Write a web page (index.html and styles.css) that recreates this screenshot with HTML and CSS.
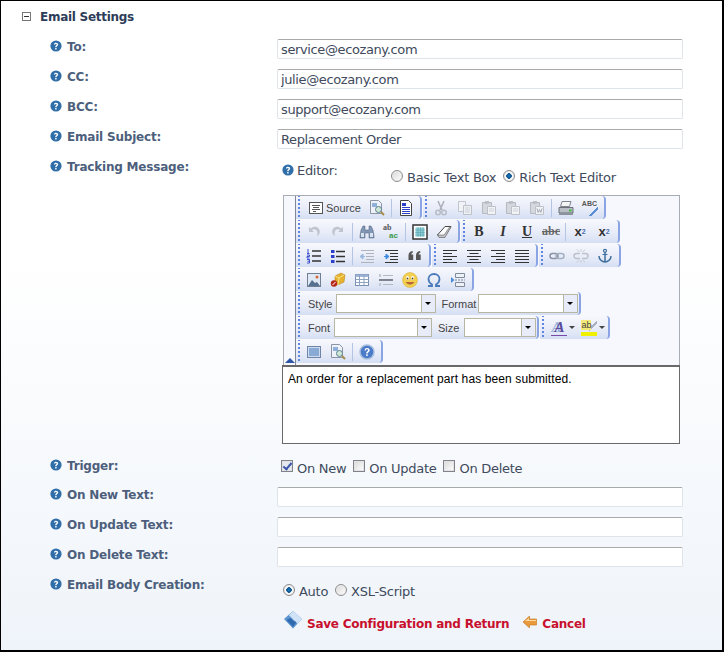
FILE: index.html
```html
<!DOCTYPE html>
<html>
<head>
  <title>Email Settings</title>
  <link rel="stylesheet" href="styles.css">
</head>
<body>
  <svg class="defs" width="0" height="0">
    <symbol id="help" viewBox="0 0 12 12"><circle cx="6" cy="6" r="5.6" fill="#2f6ea8"/><path d="M3.9 4.6C4 3.4 4.9 2.8 6 2.8c1.300 0 2.200.7 2.200 1.800 0 1.500-1.700 1.400-1.700 2.700H5.200c0-1.900 1.500-1.800 1.500-2.700 0-.4-.3-.7-.8-.7-.5 0-.8.300-.9.700zM5.200 8.100h1.400v1.300H5.200z" fill="#fff"/></symbol>
    <symbol id="source" viewBox="0 0 16 16"><rect x="1.500" y="2.500" width="13" height="11" fill="#fff" stroke="#555"/><path d="M4 5.500h8M5 7.500h6M4 9.500h8M5 11.500h3" stroke="#555"/></symbol>
    <symbol id="preview" viewBox="0 0 16 16"><path d="M1.500.5h8l3 3v10h-11z" fill="#eef2f8" stroke="#8a94a4"/><rect x="3" y="3" width="5" height="4" fill="#8fb0d8"/><circle cx="9.500" cy="9.500" r="3" fill="#cfe8d8" stroke="#5e7f92"/><path d="M12 12l3 3" stroke="#a68b4a" stroke-width="2"/></symbol>
    <symbol id="templates" viewBox="0 0 16 16"><path d="M2.500.5h8l3 3v12h-11z" fill="#fff" stroke="#444"/><path d="M4 3h4v3H4z" fill="#2b3fc8"/><path d="M4 7.500h8M4 9.500h8M4 11.500h8M4 13.500h8" stroke="#2b3fc8"/></symbol>
    <symbol id="cut" viewBox="0 0 16 16"><path d="M5 1l4 9M11 1L7 10" stroke="#aab0ba" stroke-width="1.500" fill="none"/><circle cx="5" cy="12.500" r="2.300" fill="none" stroke="#b7bcc6" stroke-width="1.500"/><circle cx="11" cy="12.500" r="2.300" fill="none" stroke="#b7bcc6" stroke-width="1.500"/></symbol>
    <symbol id="copy" viewBox="0 0 16 16"><path d="M1.500 1.500h7v10h-7z" fill="#f2f3f6" stroke="#c2c6ce"/><path d="M6.500 5.500h8v9h-8z" fill="#eef0f4" stroke="#bcc1ca"/><path d="M8 8h5M8 10h5M8 12h5" stroke="#cdd1d8"/></symbol>
    <symbol id="paste" viewBox="0 0 16 16"><path d="M1.500 2.500h9v11h-9z" fill="#d5d8de" stroke="#b4b8c0"/><path d="M4 1h4v3H4z" fill="#bcc0c8"/><path d="M6.500 6.500h8v8h-8z" fill="#f2f3f6" stroke="#bcc1ca"/><path d="M8 9h5M8 11h5" stroke="#cdd1d8"/></symbol>
    <symbol id="paste-word" viewBox="0 0 16 16"><path d="M1.500 2.500h9v11h-9z" fill="#d5d8de" stroke="#b4b8c0"/><path d="M4 1h4v3H4z" fill="#bcc0c8"/><path d="M6.500 6.500h8v8h-8z" fill="#f2f3f6" stroke="#bcc1ca"/><path d="M8 8.500l1.200 4 1.300-3 1.300 3 1.200-4" stroke="#a4a9b2" fill="none"/></symbol>
    <symbol id="print" viewBox="0 0 16 16"><path d="M4 1.500h9l-1.500 5h-9z" fill="#f4f4f4" stroke="#7f858e"/><path d="M1 7.500h14v5.500H1z" fill="#b9bec6" stroke="#6b7079"/><path d="M1 13h14v2H1z" fill="#8d939c"/><rect x="11" y="9.500" width="2.500" height="2" fill="#3fc03f"/></symbol>
    <symbol id="undo" viewBox="0 0 16 16"><path d="M3 3v5h5L6 6c2.500-1.500 5-.5 5.500 3 .1 1-.2 2-1 3 3-1 4-3.500 3-6-1.200-3-5.500-4.500-8.500-1.500z" fill="#c0c5cd"/></symbol>
    <symbol id="redo" viewBox="0 0 16 16"><path d="M13 3v5H8l2-2C7.500 4.500 5 5.500 4.500 9c-.1 1 .2 2 1 3-3-1-4-3.500-3-6C3.700 3 8 1.500 11 4.500z" fill="#c0c5cd"/></symbol>
    <symbol id="find" viewBox="0 0 16 16"><path d="M2 6l2-4h2v4h4V2h2l2 4 1 6v2h-5V9H6v5H1v-2z" fill="#8096b4" stroke="#4d5f78" stroke-width=".5"/><rect x="2" y="9" width="3" height="4" fill="#d9e3f0"/><rect x="11" y="9" width="3" height="4" fill="#d9e3f0"/></symbol>
    <symbol id="select-all" viewBox="0 0 16 16"><rect x="1" y="1" width="14" height="14" fill="#fff" stroke="#333" stroke-width="1.500"/><rect x="3.500" y="3.500" width="9" height="9" fill="#8fd0d8"/><path d="M3 6h10M3 8.500h10M3 11h10M6 3v10M8.500 3v10M11 3v10" stroke="#4f9aa8" stroke-width=".5"/></symbol>
    <symbol id="eraser" viewBox="0 0 16 16"><path d="M1.500 11L9 2.500h6l-6 9.500H3z" fill="#fff" stroke="#444"/><path d="M1.500 11l1.500 2.500h6l6-10.500-1-.5-6 8.500z" fill="#c0c2c8" stroke="#444" stroke-width=".5"/></symbol>
    <symbol id="ol" viewBox="0 0 16 16"><path d="M6 3h9M6 8h9M6 13h9" stroke="#333" stroke-width="1.300"/><path d="M2 1v4M1 5.500h2.500M1 7h2.500v1.500H1V10h2.500M1 11.500h2.500V15H1M1.500 13.200h2" stroke="#2b3fc8" stroke-width=".9" fill="none"/></symbol>
    <symbol id="ul" viewBox="0 0 16 16"><path d="M6 3.500h9M6 8.500h9M6 13.500h9" stroke="#333" stroke-width="1.300"/><path d="M1 2h3.500v3H1zM1 7h3.500v3H1zM1 12h3.500v3H1z" fill="#2b3fc8"/></symbol>
    <symbol id="outdent" viewBox="0 0 16 16"><path d="M2 2.500h13M7 5.500h8M7 8.500h8M7 11.500h8M2 14.500h13" stroke="#aeb3bc"/><path d="M1 8.500l3-2.500v5zM3 8.500h3" stroke="#9ab8de" fill="#9ab8de"/></symbol>
    <symbol id="indent" viewBox="0 0 16 16"><path d="M2 2.500h13M7 5.500h8M7 8.500h8M7 11.500h8M2 14.500h13" stroke="#333"/><path d="M6 8.500L3 6v5zM1 8.500h3" stroke="#3d8be0" fill="#3d8be0"/></symbol>
    <symbol id="quote" viewBox="0 0 16 16"><path d="M1.500 7.500c0-2.500 1.500-4 4-4.500l.5 1.500c-1 .4-1.700 1-1.800 2h2v5.500h-4.700zM9 7.500C9 5 10.500 3.500 13 3l.5 1.500c-1 .4-1.700 1-1.800 2h2v5.500H9z" fill="#555"/></symbol>
    <symbol id="left" viewBox="0 0 16 16"><path d="M1 2.500h14M1 5.500h9M1 8.500h14M1 11.500h9M1 14.500h14" stroke="#333"/></symbol>
    <symbol id="center" viewBox="0 0 16 16"><path d="M1 2.500h14M3.500 5.500h9M1 8.500h14M3.500 11.500h9M1 14.500h14" stroke="#333"/></symbol>
    <symbol id="right" viewBox="0 0 16 16"><path d="M1 2.500h14M6 5.500h9M1 8.500h14M6 11.500h9M1 14.500h14" stroke="#333"/></symbol>
    <symbol id="justify" viewBox="0 0 16 16"><path d="M1 2.500h14M1 5.500h14M1 8.500h14M1 11.500h14M1 14.500h14" stroke="#333"/></symbol>
    <symbol id="link" viewBox="0 0 16 16"><rect x="1" y="5.500" width="8" height="5" rx="2.500" fill="none" stroke="#8a94a6" stroke-width="1.500"/><rect x="7" y="5.500" width="8" height="5" rx="2.500" fill="none" stroke="#a3b0c4" stroke-width="1.500"/></symbol>
    <symbol id="unlink" viewBox="0 0 16 16"><path d="M7 5.500H3.500a2.500 2.500 0 0 0 0 5H7M9 5.500h3.500a2.500 2.500 0 0 1 0 5H9" fill="none" stroke="#bcc1ca" stroke-width="1.500"/><path d="M8 1v3M8 12v3M4 1.500l2 2.500M12 1.500L10 4M4 14.500l2-2.500M12 14.500L10 12" stroke="#c8ccd4"/></symbol>
    <symbol id="anchor" viewBox="0 0 16 16"><circle cx="8" cy="2.800" r="1.500" fill="none" stroke="#3f6f9f" stroke-width="1.200"/><path d="M8 4v10M2 8c0 3.500 3 6 6 6s6-2.500 6-6" fill="none" stroke="#3f6f9f" stroke-width="1.500"/><path d="M5.500 6.500h5" stroke="#3f6f9f"/></symbol>
    <symbol id="image" viewBox="0 0 16 16"><rect x="1.500" y="1.500" width="13" height="13" fill="#dfe8f4" stroke="#6f7f94"/><circle cx="11" cy="5" r="1.500" fill="#d86a3a"/><path d="M2 14l4-6 3 3 2-1 3 4z" fill="#56708f"/></symbol>
    <symbol id="flash" viewBox="0 0 16 16"><path d="M5 4l6-3 4 2-1 7-6 3-3-3z" fill="#e6b32e" stroke="#b07d18" stroke-width=".5"/><path d="M5 4l4 2 5-3M9 6l-1 7" stroke="#fae28a" fill="none"/><circle cx="4" cy="11.500" r="3.200" fill="#b52a1c"/><path d="M2.500 13l3-3" stroke="#fff"/></symbol>
    <symbol id="table" viewBox="0 0 16 16"><rect x="1.500" y="2.500" width="13" height="11" fill="#fff" stroke="#7a8fb4"/><path d="M1.500 2.500h13v2.500h-13z" fill="#9fb4d6"/><path d="M1.500 7.500h13M1.500 10.500h13M5.500 2.500v11M10 2.500v11" stroke="#8ea2c4"/></symbol>
    <symbol id="rule" viewBox="0 0 16 16"><path d="M5 3.500h10M5 12.500h10" stroke="#b4b8c0"/><path d="M1 8h14" stroke="#7f858e" stroke-width="2"/><path d="M1 2h2v3H1zM1 11h2v3H1z" fill="#c4c8d0"/></symbol>
    <symbol id="smiley" viewBox="0 0 16 16"><circle cx="8" cy="8" r="7.500" fill="#f2cf4e" stroke="#d4ab38" stroke-width=".5"/><ellipse cx="5.500" cy="6" rx="1.500" ry="2" fill="#fff"/><ellipse cx="10.500" cy="6" rx="1.500" ry="2" fill="#fff"/><circle cx="5.500" cy="6.500" r=".9" fill="#5a4a20"/><circle cx="10.500" cy="6.500" r=".9" fill="#5a4a20"/><path d="M4 10c1.500 3 6.500 3 8 0" fill="#c0603c" stroke="#8a6a20" stroke-width=".5"/></symbol>
    <symbol id="omega" viewBox="0 0 16 16"><path d="M2 14h4v-1.500C3.500 11 2.500 9 2.500 7 2.500 4 5 2 8 2s5.500 2 5.500 5c0 2-1 4-3.500 5.500V14h4" fill="none" stroke="#4a7ab8" stroke-width="1.800"/></symbol>
    <symbol id="pagebreak" viewBox="0 0 16 16"><path d="M5.500 1.500h9v4h-9zM5.500 10.500h9v4h-9z" fill="#eef1f6" stroke="#7f8a9a"/><path d="M5 8h10" stroke="#7f8a9a" stroke-dasharray="2 1"/><path d="M1 5l3.500 3L1 11z" fill="#4a8ad8"/></symbol>
    <symbol id="maximize" viewBox="0 0 16 16"><rect x="1.500" y="2.500" width="13" height="11" fill="#cfdcf0" stroke="#6f85a8"/><rect x="3" y="4" width="10" height="8" fill="#8aaad6"/></symbol>
    <symbol id="question" viewBox="0 0 16 16"><circle cx="8" cy="8" r="7" fill="#4a7ac8" stroke="#a8bede" stroke-width="1.500"/><path d="M5.500 6.500C5.600 4.800 6.700 4 8 4c1.500 0 2.700.9 2.700 2.200 0 1.900-2 1.800-2 3.300H7.200c0-2.400 1.800-2.200 1.800-3.300 0-.5-.4-.9-1-.9-.7 0-1 .4-1.100 1.200zM7.200 10.300h1.500v1.600H7.200z" fill="#fff"/></symbol>
    <symbol id="save" viewBox="0 0 18 18"><path d="M9 0l9 8-9 9.500L0 8z" fill="#5d94d0"/><path d="M9 0l9 8-4.500 4.700L5 4.200z" fill="#cfe2f6"/><path d="M2.500 9l4-2 3 3 3 1-3.500 5z" fill="#2f6ab0"/></symbol>
    <symbol id="back" viewBox="0 0 14 12"><path d="M6.500 0v3H13.500v6H6.500v3L0 6z" fill="#e89a3c" stroke="#c4741c" stroke-width=".6"/><path d="M6 2v2h7v1H2z" fill="#fbd9a0"/></symbol>
  </svg>

  <div class="panel">
    <h3 class="section-title"><span class="collapse"></span>Email Settings</h3>

    <div class="row">
      <label class="field-label"><svg class="help"><use href="#help"/></svg>To:</label>
      <input class="text-box" type="text" value="service@ecozany.com">
    </div>
    <div class="row">
      <label class="field-label"><svg class="help"><use href="#help"/></svg>CC:</label>
      <input class="text-box" type="text" value="julie@ecozany.com">
    </div>
    <div class="row">
      <label class="field-label"><svg class="help"><use href="#help"/></svg>BCC:</label>
      <input class="text-box" type="text" value="support@ecozany.com">
    </div>
    <div class="row">
      <label class="field-label"><svg class="help"><use href="#help"/></svg>Email Subject:</label>
      <input class="text-box" type="text" value="Replacement Order">
    </div>

    <div class="row row-editor">
      <label class="field-label"><svg class="help"><use href="#help"/></svg>Tracking Message:</label>
      <div class="editor-field">
        <div class="editor-choice">
          <span class="editor-caption"><svg class="help"><use href="#help"/></svg>Editor:</span>
          <label class="option"><input type="radio" name="editor">Basic Text Box</label>
          <label class="option"><input type="radio" name="editor" checked>Rich Text Editor</label>
        </div>

        <div class="editor">
          <div class="toolbars">
            <div class="collapser"><span class="collapse-arrow"></span></div>
            <div class="toolbar-rows">
              <div class="tb-row">
                <div class="tb-group">
                  <span class="tb-btn tb-text"><svg class="ico"><use href="#source"/></svg>Source</span>
                  <span class="tb-btn"><svg class="ico"><use href="#preview"/></svg></span>
                  <i class="sep"></i>
                  <span class="tb-btn"><svg class="ico"><use href="#templates"/></svg></span>
                </div>
                <div class="tb-group">
                  <span class="tb-btn"><svg class="ico"><use href="#cut"/></svg></span>
                  <span class="tb-btn"><svg class="ico"><use href="#copy"/></svg></span>
                  <span class="tb-btn"><svg class="ico"><use href="#paste"/></svg></span>
                  <span class="tb-btn"><svg class="ico"><use href="#paste"/></svg></span>
                  <span class="tb-btn"><svg class="ico"><use href="#paste-word"/></svg></span>
                  <i class="sep"></i>
                  <span class="tb-btn"><svg class="ico"><use href="#print"/></svg></span>
                  <span class="tb-btn"><span class="spell-icon">ABC</span></span>
                </div>
              </div>
              <div class="tb-row">
                <div class="tb-group">
                  <span class="tb-btn"><svg class="ico"><use href="#undo"/></svg></span>
                  <span class="tb-btn"><svg class="ico"><use href="#redo"/></svg></span>
                  <i class="sep"></i>
                  <span class="tb-btn"><svg class="ico"><use href="#find"/></svg></span>
                  <span class="tb-btn"><span class="replace-icon">ab<br><em>ac</em></span></span>
                  <i class="sep"></i>
                  <span class="tb-btn"><svg class="ico"><use href="#select-all"/></svg></span>
                  <span class="tb-btn"><svg class="ico"><use href="#eraser"/></svg></span>
                </div>
                <div class="tb-group">
                  <span class="tb-btn tb-letter tb-bold">B</span>
                  <span class="tb-btn tb-letter tb-italic">I</span>
                  <span class="tb-btn tb-letter tb-under">U</span>
                  <span class="tb-btn tb-letter tb-strike">abc</span>
                  <i class="sep"></i>
                  <span class="tb-btn tb-letter tb-bold tb-x">x<sub>2</sub></span>
                  <span class="tb-btn tb-letter tb-bold tb-x">x<sup>2</sup></span>
                </div>
              </div>
              <div class="tb-row">
                <div class="tb-group">
                  <span class="tb-btn"><svg class="ico"><use href="#ol"/></svg></span>
                  <span class="tb-btn"><svg class="ico"><use href="#ul"/></svg></span>
                  <i class="sep"></i>
                  <span class="tb-btn"><svg class="ico"><use href="#outdent"/></svg></span>
                  <span class="tb-btn"><svg class="ico"><use href="#indent"/></svg></span>
                  <span class="tb-btn"><svg class="ico"><use href="#quote"/></svg></span>
                </div>
                <div class="tb-group">
                  <span class="tb-btn"><svg class="ico"><use href="#left"/></svg></span>
                  <span class="tb-btn"><svg class="ico"><use href="#center"/></svg></span>
                  <span class="tb-btn"><svg class="ico"><use href="#right"/></svg></span>
                  <span class="tb-btn"><svg class="ico"><use href="#justify"/></svg></span>
                </div>
                <div class="tb-group">
                  <span class="tb-btn"><svg class="ico"><use href="#link"/></svg></span>
                  <span class="tb-btn"><svg class="ico"><use href="#unlink"/></svg></span>
                  <span class="tb-btn"><svg class="ico"><use href="#anchor"/></svg></span>
                </div>
              </div>
              <div class="tb-row">
                <div class="tb-group">
                  <span class="tb-btn"><svg class="ico"><use href="#image"/></svg></span>
                  <span class="tb-btn"><svg class="ico"><use href="#flash"/></svg></span>
                  <span class="tb-btn"><svg class="ico"><use href="#table"/></svg></span>
                  <span class="tb-btn"><svg class="ico"><use href="#rule"/></svg></span>
                  <span class="tb-btn"><svg class="ico"><use href="#smiley"/></svg></span>
                  <span class="tb-btn"><svg class="ico"><use href="#omega"/></svg></span>
                  <span class="tb-btn"><svg class="ico"><use href="#pagebreak"/></svg></span>
                </div>
              </div>
              <div class="tb-row">
                <div class="tb-group tb-combos">
                  <span class="combo-label">Style</span>
                  <span class="combo combo-wide"><span class="combo-arrow"></span></span>
                  <span class="combo-label combo-label-format">Format</span>
                  <span class="combo combo-wide"><span class="combo-arrow"></span></span>
                </div>
              </div>
              <div class="tb-row">
                <div class="tb-group tb-combos">
                  <span class="combo-label">Font</span>
                  <span class="combo combo-font"><span class="combo-arrow"></span></span>
                  <span class="combo-label combo-label-size">Size</span>
                  <span class="combo combo-size"><span class="combo-arrow"></span></span>
                </div>
                <div class="tb-group">
                  <span class="tb-btn tb-drop"><span class="color-icon">A</span><b class="drop-arrow"></b></span>
                  <span class="tb-btn tb-drop"><span class="highlight-icon">ab</span><b class="drop-arrow"></b></span>
                </div>
              </div>
              <div class="tb-row">
                <div class="tb-group">
                  <span class="tb-btn"><svg class="ico"><use href="#maximize"/></svg></span>
                  <span class="tb-btn"><svg class="ico"><use href="#preview"/></svg></span>
                  <i class="sep"></i>
                  <span class="tb-btn"><svg class="ico"><use href="#question"/></svg></span>
                </div>
              </div>
            </div>
          </div>
          <div class="editor-body">An order for a replacement part has been submitted.</div>
        </div>
      </div>
    </div>

    <div class="row row-trigger">
      <label class="field-label"><svg class="help"><use href="#help"/></svg>Trigger:</label>
      <div class="options">
        <label class="option"><input type="checkbox" checked>On New</label>
        <label class="option"><input type="checkbox">On Update</label>
        <label class="option"><input type="checkbox">On Delete</label>
      </div>
    </div>
    <div class="row">
      <label class="field-label"><svg class="help"><use href="#help"/></svg>On New Text:</label>
      <input class="text-box" type="text">
    </div>
    <div class="row">
      <label class="field-label"><svg class="help"><use href="#help"/></svg>On Update Text:</label>
      <input class="text-box" type="text">
    </div>
    <div class="row">
      <label class="field-label"><svg class="help"><use href="#help"/></svg>On Delete Text:</label>
      <input class="text-box" type="text">
    </div>
    <div class="row">
      <label class="field-label"><svg class="help"><use href="#help"/></svg>Email Body Creation:</label>
      <div class="options options-body">
        <label class="option"><input type="radio" name="body" checked>Auto</label>
        <label class="option"><input type="radio" name="body">XSL-Script</label>
      </div>
    </div>

    <div class="actions">
      <a class="action" href="#"><svg class="save-icon"><use href="#save"/></svg>Save Configuration and Return</a>
      <a class="action" href="#"><svg class="back-icon"><use href="#back"/></svg>Cancel</a>
    </div>
  </div>
</body>
</html>
```

FILE: styles.css
```css
html, body {
  margin: 0;
  padding: 0;
}

body {
  width: 724px;
  height: 652px;
  overflow: hidden;
  font-family: "DejaVu Sans", Verdana, sans-serif;
}

.defs {
  position: absolute;
}

.panel {
  box-sizing: border-box;
  width: 724px;
  height: 652px;
  border-style: solid;
  border-color: #000000;
  border-width: 1px 2px 2px 1px;
  background: linear-gradient(to bottom, #ffffff 0, #ffffff 40%, #eff4fa 100%);
  padding-top: 8px;
}

.section-title {
  display: flex;
  align-items: center;
  height: 15px;
  margin: 0 0 15px 21px;
  font-size: 12px;
  font-weight: bold;
  letter-spacing: -0.28px;
  color: #2d3c58;
}

.collapse {
  box-sizing: border-box;
  width: 9px;
  height: 9px;
  margin-right: 9px;
  border: 1px solid #777777;
  background: linear-gradient(#333333, #333333) center / 5px 1px no-repeat;
}

.row {
  display: flex;
  align-items: flex-start;
  height: 30px;
}

.field-label {
  display: flex;
  align-items: center;
  box-sizing: border-box;
  width: 276px;
  height: 15px;
  padding-left: 49px;
  font-size: 12px;
  font-weight: bold;
  letter-spacing: -0.2px;
  color: #4d5f7c;
}

.help {
  width: 12px;
  height: 12px;
  margin: 0 5px 2px 0;
  flex: none;
}

.text-box {
  box-sizing: border-box;
  width: 406px;
  height: 20px;
  padding: 0 3px;
  border: 1px solid #dfe3ea;
  border-top-color: #a9a9a9;
  border-radius: 2px;
  background: #ffffff;
  font-family: inherit;
  font-size: 13px;
  letter-spacing: -0.38px;
  color: #404a5c;
}

.row-editor {
  height: 299px;
}

.row-trigger {
  height: 29px;
}

.editor-field {
  margin-left: 5px;
}

.editor-choice {
  display: flex;
  height: 36px;
  font-size: 13px;
  letter-spacing: -0.3px;
  color: #404a5c;
}

.editor-caption {
  display: flex;
  align-items: center;
  height: 23px;
  width: 109px;
}

.editor-caption .help {
  margin-right: 3px;
}

.editor-choice .option {
  margin-top: 9px;
}

.option {
  display: inline-flex;
  align-items: center;
  height: 18px;
  margin-right: 7px;
  font-size: 13px;
  letter-spacing: -0.28px;
  color: #404a5c;
}

.option input {
  appearance: none;
  box-sizing: border-box;
  width: 12px;
  height: 12px;
  margin: 0 4px 2px 0;
  border: 1px solid #8d8d8d;
  background: linear-gradient(135deg, #d8d8d8, #ffffff);
  flex: none;
}

.option input[type="radio"] {
  border-radius: 50%;
  box-shadow: inset 0 0 0 1px #eeeeee;
}

.option input[type="radio"]:checked {
  background: radial-gradient(circle, #1a7fc0 0, #0c4f8c 2.500px, #ffffff 3px, #dddddd 100%);
}

.option input[type="checkbox"] {
  margin-bottom: 4px;
  border-color: #80838c;
  box-shadow: inset 0 0 0 1px #e2e2e2;
}

.option input[type="checkbox"]:checked {
  background: #e6e8f0;
}

.option input[type="checkbox"]:checked::after {
  content: "";
  display: block;
  width: 3px;
  height: 7px;
  margin: 0 0 0 3px;
  border: solid #3a55a8;
  border-width: 0 2px 2px 0;
  transform: rotate(40deg);
}

.editor {
  width: 398px;
}

.toolbars {
  display: flex;
  box-sizing: border-box;
  width: 397px;
  height: 170px;
  margin-left: 1px;
  border: 1px solid #a8acb4;
  border-bottom: 0;
  background: #f7f8fd;
}

.collapser {
  position: relative;
  box-sizing: border-box;
  width: 12px;
  border-right: 1px solid #7f8698;
  flex: none;
}

.collapse-arrow {
  position: absolute;
  left: 1px;
  bottom: 2px;
  border-style: solid;
  border-width: 0 5px 5px 5px;
  border-color: transparent transparent #2d55a8 transparent;
}

.tb-row {
  display: flex;
  height: 24px;
}

.tb-group {
  display: flex;
  align-items: center;
  box-sizing: border-box;
  height: 23px;
  padding: 0 2px 0 6px;
  margin-right: 1px;
  border-radius: 0 4px 4px 0;
  border-right: 2px solid #8aa4e4;
  background:
    radial-gradient(circle, #5f86e0 0.900px, transparent 1.100px) 2px 2px / 2px 4px repeat-y,
    linear-gradient(to bottom, #f7f8fd 0, #e8ecf8 55%, #d5dff3 100%);
}

.tb-btn {
  display: flex;
  align-items: center;
  justify-content: center;
  width: 24px;
  height: 22px;
  font-size: 12px;
  color: #333333;
}

.tb-text {
  width: auto;
  padding: 0 4px 0 6px;
  font-family: "Liberation Sans", Arial, sans-serif;
  font-size: 11px;
  color: #444444;
}

.tb-text .ico {
  margin-right: 2px;
}

.ico {
  width: 16px;
  height: 16px;
  flex: none;
}

.sep {
  width: 1px;
  height: 18px;
  margin: 0 2px;
  background: #b4c4e4;
}

.spell-icon {
  width: 16px;
  height: 16px;
  font-family: "Liberation Sans", Arial, sans-serif;
  font-size: 7px;
  font-weight: bold;
  line-height: 8px;
  color: #555555;
  background: linear-gradient(135deg, transparent 58%, #5c8fd6 58%, #5c8fd6 72%, transparent 72%) bottom right / 12px 10px no-repeat;
}

.replace-icon {
  width: 16px;
  font-family: "Liberation Serif", serif;
  font-size: 8px;
  font-weight: bold;
  line-height: 8px;
  color: #555555;
}

.replace-icon em {
  margin-left: 6px;
  font-family: "Liberation Sans", sans-serif;
  font-style: normal;
  color: #3a9a4a;
}

.tb-letter {
  font-family: "Liberation Serif", serif;
  font-size: 14px;
  color: #333333;
}

.tb-bold {
  font-weight: bold;
}

.tb-italic {
  font-style: italic;
  font-weight: bold;
}

.tb-under {
  text-decoration: underline;
  font-weight: bold;
}

.tb-strike {
  text-decoration: line-through;
  font-size: 12px;
  font-weight: bold;
  color: #666666;
}

.tb-x {
  font-family: "Liberation Sans", sans-serif;
  font-size: 13px;
}

.tb-x sub,
.tb-x sup {
  font-size: 7px;
  color: #4a6fb0;
}

.tb-drop {
  width: 30px;
  justify-content: flex-start;
  padding-left: 5px;
  box-sizing: border-box;
}

.color-icon {
  width: 16px;
  height: 16px;
  font-family: "Liberation Serif", serif;
  font-size: 15px;
  font-style: italic;
  font-weight: bold;
  line-height: 15px;
  text-align: center;
  color: #5a4a9a;
  text-shadow: -3px 0 #9db4de;
  border-bottom: 1px solid #7a4aa8;
  box-sizing: border-box;
}

.highlight-icon {
  box-sizing: border-box;
  width: 16px;
  height: 16px;
  font-family: "Liberation Sans", sans-serif;
  font-size: 9px;
  line-height: 10px;
  color: #444444;
  background:
    linear-gradient(#f0f000, #f0f000) bottom / 100% 4px no-repeat,
    linear-gradient(#f4ea78, #f4ea78) top left / 10px 10px no-repeat,
    linear-gradient(135deg, transparent 45%, #aab2c2 45%, #aab2c2 60%, transparent 60%) top right / 8px 11px no-repeat;
}

.drop-arrow {
  margin-left: 2px;
  border-style: solid;
  border-width: 3px 3px 0 3px;
  border-color: #444444 transparent transparent transparent;
}

.tb-combos {
  padding-left: 12px;
  padding-right: 1px;
  font-family: "Liberation Sans", Arial, sans-serif;
  font-size: 11px;
  color: #444444;
}

.combo-label {
  margin-right: 4px;
}

.combo-label-format {
  margin: 0 2px 0 5px;
}

.combo-label-size {
  margin: 0 5px 0 6px;
}

.combo {
  display: flex;
  justify-content: flex-end;
  box-sizing: border-box;
  height: 19px;
  border: 1px solid #b7b7a4;
  background: #ffffff;
}

.combo-wide {
  width: 100px;
}

.combo-font {
  width: 98px;
}

.combo-size {
  width: 72px;
}

.combo-arrow {
  position: relative;
  width: 13px;
  border-left: 1px solid #b7b7a4;
  background: #e8ecf8;
}

.combo-arrow::after {
  content: "";
  position: absolute;
  left: 3px;
  top: 7px;
  border-style: solid;
  border-width: 3px 3px 0 3px;
  border-color: #000000 transparent transparent transparent;
}

.editor-body {
  box-sizing: border-box;
  width: 398px;
  height: 79px;
  padding: 5px 5px;
  border: 1px solid #696969;
  border-top-width: 2px;
  background: #ffffff;
  font-family: "Liberation Sans", Arial, sans-serif;
  font-size: 12px;
  letter-spacing: 0.11px;
  color: #000000;
}

.options {
  display: flex;
  margin-left: 4px;
  margin-top: 1px;
}

.options-body {
  margin-left: 6px;
  margin-top: 5px;
}

.actions {
  display: flex;
  align-items: flex-end;
  height: 24px;
  margin-left: 283px;
}

.action {
  display: inline-flex;
  align-items: flex-end;
  margin-right: 14px;
  font-size: 12px;
  font-weight: bold;
  letter-spacing: -0.24px;
  color: #c8102e;
  text-decoration: none;
}

.save-icon {
  width: 18px;
  height: 18px;
  margin-right: 5px;
  margin-bottom: 2px;
}

.back-icon {
  width: 14px;
  height: 12px;
  margin-right: 5px;
  margin-bottom: 3px;
}
```
